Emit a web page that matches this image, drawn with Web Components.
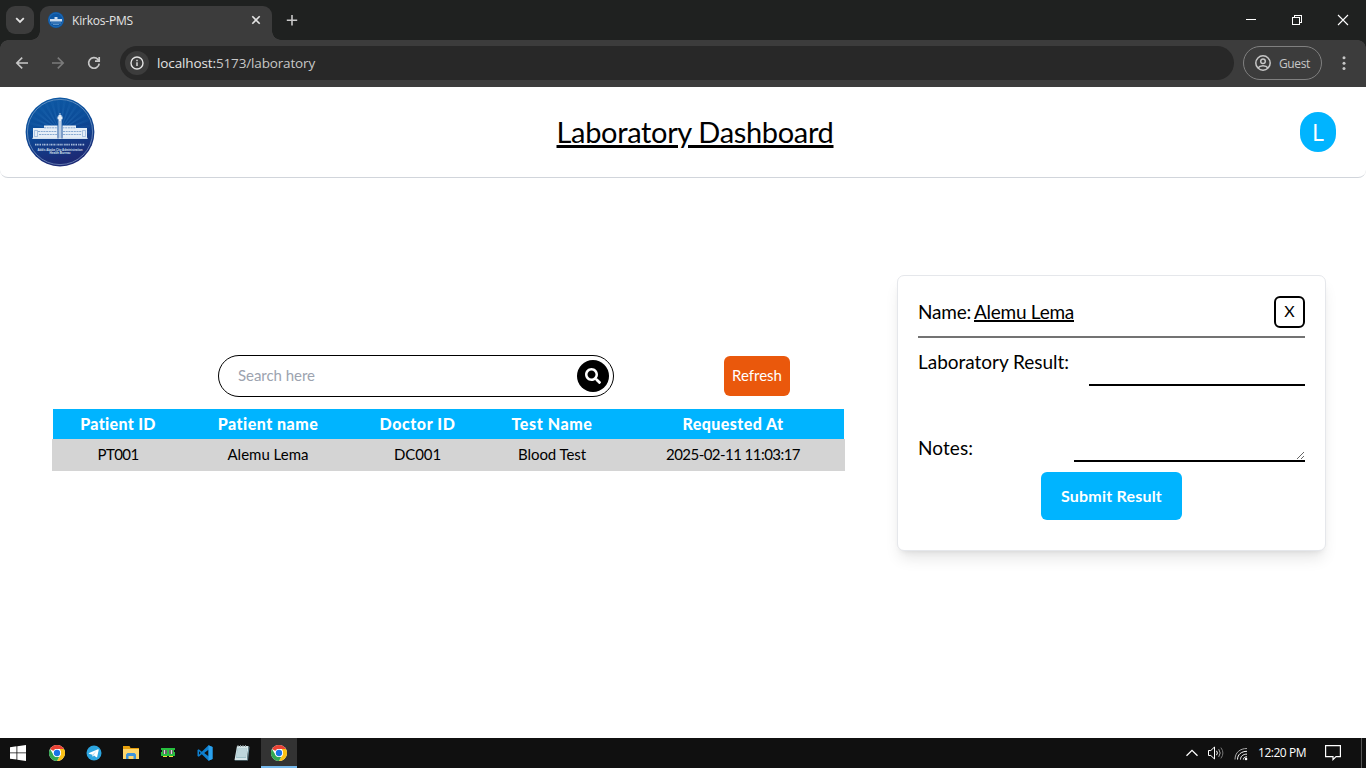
<!DOCTYPE html>
<html lang="en">
<head>
<meta charset="utf-8">
<title>Kirkos-PMS</title>
<style>
html,body{margin:0;padding:0;height:100%;overflow:hidden;background:#fff}
body{display:grid;grid-template-rows:40px 47px 1fr 30px;height:768px;font-family:"Open Sans","Noto Sans",sans-serif;font-size:12px}
</style>
</head>
<body>
<tab-strip><fit-text w="61">Kirkos-PMS</fit-text></tab-strip>
<browser-toolbar>
  <fit-text slot="host" w="59">localhost:</fit-text><fit-text slot="path" w="99">5173/laboratory</fit-text>
  <fit-text slot="profile" w="31">Guest</fit-text>
</browser-toolbar>
<lab-page></lab-page>
<task-bar></task-bar>

<script>
const define = (name, html, setup) => customElements.define(name, class extends HTMLElement {
  constructor() {
    super();
    this.attachShadow({ mode: 'open' });
    const t = document.createElement('template');
    t.innerHTML = html;
    this.shadowRoot.append(t.content.cloneNode(true));
    if (setup) setup(this, this.shadowRoot);
  }
});

/* Round city crest shown as the page logo */
define('city-crest', `
<style>:host{display:block;width:70px;height:70px;flex:none}svg{display:block;width:100%;height:100%}</style>
<svg viewBox="0 0 70 70">
  <defs>
    <linearGradient id="g" x1="0" y1="0" x2=".3" y2="1"><stop offset="0" stop-color="#0d5ba6"/><stop offset=".5" stop-color="#0b4b98"/><stop offset="1" stop-color="#1c2a75"/></linearGradient>
    <clipPath id="c"><path d="M0 0h70v40H0z"/></clipPath>
    <radialGradient id="r" gradientUnits="userSpaceOnUse" cx="35" cy="34" r="31"><stop offset="0" stop-color="#3d8bd0" stop-opacity=".4"/><stop offset="1" stop-color="#3d8bd0" stop-opacity=".05"/></radialGradient>
  </defs>
  <circle cx="35" cy="35" r="34.4" fill="url(#g)"/>
  <g id="rays" clip-path="url(#c)" fill="url(#r)"></g>
  <circle cx="35" cy="35" r="32.6" fill="none" stroke="#9db9d8" stroke-width=".55"/>
  <g fill="#e6eef7">
    <path d="M33.500 18h3v1.600h1v2.600h-1V42h-3V22.200h-1v-2.600h1z"/><path d="M34.600 16h.8v3h-.8z"/>
    <path d="M19 28.500h13.500V42H8V31h11z"/><path d="M51 28.500H37.500V42H62V31H51z"/>
  </g>
  <g stroke="#6f97c6" stroke-width=".8" fill="none">
    <path d="M19 30.800h13.500M37.500 30.800H51M13 34.500h19M38 34.500h19M14 37.500h18M38 37.500h18" stroke-dasharray="2 .7"/>
    <path d="M35 24v17" stroke-width=".7"/><path d="M9.500 33.500h3v6h-3zM57.500 33.500h3v6h-3z" stroke-width=".5"/>
  </g>
  <path d="M7 41.300h56" stroke="#cbd9ea" stroke-width=".8"/>
  <path d="M10 47.700h50" stroke="#a9bfdc" stroke-width="1.700" stroke-dasharray="1 .5 1.400 .5 .8 .5 1.300 1.200"/>
  <g fill="#d5e0ef" font-family="Liberation Sans, sans-serif" font-weight="700" font-size="3.500" text-anchor="middle">
    <text x="35" y="53.500" textLength="45" lengthAdjust="spacingAndGlyphs">Addis Ababa City Administration</text>
    <text x="35" y="56.900" textLength="21" lengthAdjust="spacingAndGlyphs">Health Bureau</text>
  </g>
</svg>`, (el, root) => {
  let d = '';
  for (let i = 0; i < 30; i++) {
    const a = i * Math.PI / 15, b = a + 0.09;
    d += `<path d="M35 34L${35 + 31 * Math.cos(a)} ${34 + 31 * Math.sin(a)}L${35 + 31 * Math.cos(b)} ${34 + 31 * Math.sin(b)}z"/>`;
  }
  root.getElementById('rays').innerHTML = d;
});

define('tab-strip', `
<style>
:host{display:flex;background:#1f2120;height:40px;color:#e3e3e3;box-sizing:border-box;padding:6px 0 0 6px}
.search{width:28px;height:28px;border-radius:9px;background:#3c3c3c;display:grid;place-items:center}
.tab{position:relative;width:232px;height:34px;margin-left:6px;background:#3c3c3c;border-radius:9px 9px 0 0;display:flex;align-items:center;box-sizing:border-box;padding:0 10px 6px 8px;line-height:18px}
.tab:before,.tab:after{content:"";position:absolute;bottom:0;width:9px;height:9px}
.tab:before{left:-9px;background:radial-gradient(circle at 0 0,transparent 8.5px,#3c3c3c 9px)}
.tab:after{right:-9px;background:radial-gradient(circle at 100% 0,transparent 8.5px,#3c3c3c 9px)}
.fav{width:16px;height:16px;margin-right:8px;display:block}
slot{display:block;padding-top:2px}
.x{margin-left:auto}
svg{display:block}
.new{margin:6px 0 0 12px}
.win{margin-left:auto;display:flex;height:28px;margin-right:0}
.win div{width:46px;display:grid;place-items:center}
</style>
<div class="search"><svg width="10" height="10" viewBox="0 0 10 10" fill="none" stroke="#e3e3e3" stroke-width="1.800"><path d="M1.200 3.200L5 7l3.800-3.800"/></svg></div>
<div class="tab">
  <svg class="fav" viewBox="0 0 16 16"><circle cx="8" cy="8" r="8" fill="#0c57a5"/><circle cx="8" cy="8" r="7" fill="none" stroke="#2f78bd" stroke-width=".6"/><path d="M2 7h4.500V5h3v2H14v2.500H2z" fill="#c9dcf0"/><path d="M3 11h10M5 12.500h6" stroke="#6d9fd0" stroke-width=".8"/></svg>
  <slot></slot>
  <svg class="x" width="12" height="12" viewBox="0 0 12 12" stroke="#e3e3e3" stroke-width="1.600"><path d="M2.300 2.300l7.400 7.400M9.700 2.300L2.300 9.700"/></svg>
</div>
<svg class="new" width="16" height="16" viewBox="0 0 16 16" stroke="#c9c9c9" stroke-width="1.600"><path d="M8 3v10.400M2.800 8.200h10.400"/></svg>
<div class="win">
  <div><svg width="12" height="12" shape-rendering="crispEdges"><path d="M1 5h10v1H1z" fill="#fff"/></svg></div>
  <div><svg width="12" height="12" fill="none" stroke="#fff" shape-rendering="crispEdges"><path d="M1.500 3.500h7v7h-7zM3.500 3V1.500h7v7H9"/></svg></div>
  <div><svg width="12" height="12" stroke="#fff" stroke-width="1.100"><path d="M1 1l10 10M11 1L1 11"/></svg></div>
</div>`);

define('browser-toolbar', `
<style>
:host{display:flex;align-items:center;height:47px;box-sizing:border-box;padding:0 14px 1px 14px;color:#e3e3e3;
 background:radial-gradient(circle at 8px 8px,#3c3c3c 7.500px,#1f2120 8px) 0 0/8px 8px no-repeat,radial-gradient(circle at 0 8px,#3c3c3c 7.500px,#1f2120 8px) 100% 0/8px 8px no-repeat,#3c3c3c}
svg{display:block;flex:none}
.nav{display:flex;gap:20px}
.omni{margin-left:18px;width:1114px;height:34px;border-radius:17px;background:#282828;display:flex;align-items:center;box-sizing:border-box;padding-left:5px;font-size:13.500px}
.info{width:24px;height:24px;border-radius:50%;background:#3c3c3c;display:grid;place-items:center;margin-right:8px}
.path{color:#c7c7c7}
.guest{margin-left:9px;width:79px;height:34px;border:1px solid #808080;border-radius:17px;box-sizing:border-box;display:flex;align-items:center;padding-left:11px;gap:8px;color:#c7c7c7}
.dots{margin-left:auto}
</style>
<div class="nav">
<svg width="16" height="16" viewBox="0 0 16 16" fill="none" stroke="#c7c7c7" stroke-width="1.600"><path d="M14 8H3M8.200 2.600L2.800 8l5.400 5.400"/></svg>
<svg width="16" height="16" viewBox="0 0 16 16" fill="none" stroke="#7b7b7b" stroke-width="1.600"><path d="M2 8h11M7.800 2.600L13.200 8l-5.400 5.400"/></svg>
<svg width="16" height="16" viewBox="0 0 16 16" fill="none" stroke="#c7c7c7" stroke-width="1.700"><path d="M13.200 8.600A5.300 5.300 0 1 1 11.900 4.400L13 5.700"/><path d="M13.200 2v4.200H9"/></svg>
</div>
<div class="omni"><div class="info"><svg width="14" height="14" viewBox="0 0 14 14" fill="none" stroke="#e3e3e3" stroke-width="1.400"><circle cx="7" cy="7" r="6"/><path d="M7 6.200V10M7 3.800v1.500"/></svg></div><slot name="host"></slot><span class="path"><slot name="path"></slot></span></div>
<div class="guest"><svg width="16" height="16" viewBox="0 0 16 16" fill="none" stroke="#c7c7c7" stroke-width="1.500"><circle cx="8" cy="8" r="7.200"/><circle cx="8" cy="6.200" r="2.300"/><path d="M3 13c1.300-2 3-2.300 5-2.300s3.700.3 5 2.300"/></svg><slot name="profile"></slot></div>
<svg class="dots" width="16" height="16" fill="#c7c7c7"><circle cx="8" cy="2.800" r="1.500"/><circle cx="8" cy="8.200" r="1.500"/><circle cx="8" cy="13.600" r="1.500"/></svg>`);

define('page-header', `
<style>
:host{display:flex;align-items:center;justify-content:space-between;height:91px;box-sizing:border-box;border-bottom:1px solid #d1d5db;border-radius:0 0 8px 8px;padding:0 30px 0 25px}
h1{margin:0;font-weight:400;font-size:29px;line-height:36px;padding:0 5px 0 0}
.avatar{width:36px;height:40px;border-radius:18px;background:#00b4ff;color:#fff;display:grid;place-items:center;font:23px/40px "Noto Sans",sans-serif}
</style>
<city-crest></city-crest><h1><slot></slot></h1><div class="avatar">L</div>`);

define('search-box', `
<style>
:host{display:flex;align-items:center;justify-content:space-between;box-sizing:border-box;width:396px;height:42px;border:1px solid #000;border-radius:21px;padding:0 4px 0 19px;color:#9ca3af}
slot{display:block;padding-bottom:2px}
i{width:32px;height:32px;border-radius:50%;background:#000;display:grid;place-items:center}
</style>
<slot></slot><i><svg width="16" height="16" viewBox="0 0 512 512" fill="#fff"><path d="M505 442.700L405.300 343c-4.500-4.500-10.600-7-17-7H372c27.600-35.300 44-79.700 44-128C416 93.100 322.900 0 208 0S0 93.100 0 208s93.100 208 208 208c48.300 0 92.700-16.400 128-44v16.300c0 6.400 2.500 12.500 7 17l99.700 99.700c9.400 9.400 24.600 9.400 33.900 0l28.300-28.300c9.400-9.400 9.400-24.600.1-34zM208 336c-70.700 0-128-57.200-128-128 0-70.700 57.200-128 128-128 70.700 0 128 57.200 128 128 0 70.700-57.200 128-128 128z"/></svg></i>`);

define('push-button', `
<style>
:host{display:block}
button{display:block;font:inherit;line-height:20px;margin:0;border:0;border-radius:6px;color:#fff;background:var(--bg);padding:var(--pad)}
</style><button><slot></slot></button>`);

define('request-table', `
<style>
:host{display:block;width:793px}
.row{display:grid;grid-template-columns:130px 170px 129px 140px 222px;text-align:center;font-size:15px}
.head{background:#00b4ff;color:#fff;font-weight:900;font-size:16px;height:30px;line-height:29px;margin:0 1px}
.body{background:#d4d4d4;height:32px;line-height:30px;padding:0 1px}
</style>
<div class="row head"><span><fit-text w="76">Patient ID</fit-text></span><span><fit-text w="101">Patient name</fit-text></span><span><fit-text w="76">Doctor ID</fit-text></span><span><fit-text w="81">Test Name</fit-text></span><span><fit-text w="101">Requested At</fit-text></span></div>
<div class="row body"><span><fit-text w="41">PT001</fit-text></span><span><fit-text w="81">Alemu Lema</fit-text></span><span><fit-text w="47">DC001</fit-text></span><span><fit-text w="68">Blood Test</fit-text></span><span><fit-text w="134">2025-02-11 11:03:17</fit-text></span></div>`);

define('result-card', `
<style>
:host{display:flex;flex-direction:column;box-sizing:border-box;width:429px;height:276px;border:1px solid #e5e7eb;border-radius:7px;padding:20px;box-shadow:0 10px 15px -3px rgba(0,0,0,.1),0 4px 6px -4px rgba(0,0,0,.1);font-size:19px;line-height:28px;background:#fff}
.top{display:flex;justify-content:space-between;height:40px;border-bottom:2px solid #737373}
.name{display:flex;gap:3px;padding-top:2px}
u{text-decoration-thickness:2px;text-underline-offset:1px;text-decoration-skip-ink:none}
.x{width:31px;height:32px;box-sizing:border-box;border:2px solid #000;border-radius:6px;background:#fff;padding:0 0 2px;font:16px/26px Lato,sans-serif;color:#000}
.line{display:flex;justify-content:space-between}
.result{height:48px;padding-top:0}
.result label{padding-top:10px}
.result input{width:216px;height:36px;margin-top:12px}
.notes{height:62px;margin-top:14px}
.notes label{padding-top:34px}
input,textarea{box-sizing:border-box;border:0;border-bottom:2px solid #000;padding:0;background:none;outline:0;border-radius:0}
textarea{width:231px;height:62px;resize:vertical;margin:0}
push-button{align-self:center;margin-top:10px;font-size:16px;font-weight:700;--bg:#00b4ff;--pad:14px 20px}
</style>
<div class="top"><div class="name"><fit-text w="53">Name:</fit-text><fit-text w="100"><u>Alemu Lema</u></fit-text></div><button class="x">X</button></div>
<div class="line result"><label><fit-text w="151">Laboratory Result:</fit-text></label><input></div>
<div class="line notes"><label><fit-text w="55">Notes:</fit-text></label><textarea></textarea></div>
<push-button><fit-text w="101">Submit Result</fit-text></push-button>`);

define('lab-page', `
<style>
:host{display:flex;flex-direction:column;background:#fff;color:#000;font-family:Lato,"Liberation Sans",sans-serif;font-size:15px;min-height:0}
u{text-decoration-thickness:3px;text-underline-offset:2px}
main{flex:1;display:flex;justify-content:space-between;align-items:flex-start;padding:97px 40px 0 52px}
section{padding-top:80px}
.tools{display:flex;align-items:center;padding:0 55px 0 166px;justify-content:space-between;margin-bottom:12px}
.tools push-button{--bg:#ea580c;--pad:9px 8px 11px}
</style>
<page-header><fit-text w="277"><u>Laboratory Dashboard</u></fit-text></page-header>
<main>
  <section>
    <div class="tools"><search-box><fit-text w="77">Search here</fit-text></search-box><push-button><fit-text w="50">Refresh</fit-text></push-button></div>
    <request-table></request-table>
  </section>
  <result-card></result-card>
</main>`);

define('chrome-icon', `
<style>:host,svg{display:block}</style>
<svg width="16" height="16" viewBox="0 0 48 48"><circle cx="24" cy="24" r="24" fill="#fff"/>
<path d="M24 0a24 24 0 0 1 20.800 12H24a12 12 0 0 0-10.400 6L3.200 12A24 24 0 0 1 24 0z" fill="#ea4335"/>
<path d="M44.800 12A24 24 0 0 1 24 48l10.400-18a12 12 0 0 0 0-12L33 12z" fill="#fbc116"/>
<path d="M24 48A24 24 0 0 1 3.200 12l10.400 18A12 12 0 0 0 24 36l7-.5z" fill="#34a853"/>
<circle cx="24" cy="24" r="12" fill="#fff"/><circle cx="24" cy="24" r="9.500" fill="#1a73e8"/></svg>`);

define('task-bar', `
<style>
:host{display:flex;height:30px;background:#101010;color:#fff}
svg{display:block}
.apps{display:flex}
.apps>*{width:37px;height:30px;display:grid;place-items:center}
.apps .start{width:38px;place-items:center start;padding-left:10px;box-sizing:border-box}
.apps .on{width:36px;margin-left:1px;background:#333;box-shadow:inset 0 -2px #76b9ed}
.tray{margin-left:auto;display:flex;align-items:center}
.clock{margin:0 19px 0 9px;line-height:30px}
.note{margin-bottom:1px}
.peek{width:4px;height:30px;margin-left:20px;border-left:1px solid #555}
</style>
<div class="apps">
<div class="start"><svg width="16" height="16" fill="#fff"><path d="M0 2.200l6.500-.9v6.200H0zM7.300 1.200L16 0v7.500H7.300zM0 8.300h6.500v6.300L0 13.700zM7.300 8.300H16V16l-8.700-1.200z"/></svg></div>
<div><chrome-icon></chrome-icon></div>
<div><svg width="16" height="16"><circle cx="8" cy="8" r="7.500" fill="#2ca5e0"/><path d="M3 7.900l9-3.600c.5-.2.800.1.700.6l-1.500 6.900c-.1.500-.5.600-.9.400L8 10.500l-1.200 1.200-.5-2L3 8.700c-.4-.2-.4-.6 0-.8z" fill="#fff"/><path d="M6.300 9.700l4-3.600-2.800 4.100-.7 1.500z" fill="#b5d9ee"/></svg></div>
<div><svg width="16" height="16"><path d="M0 1h6.500l1 2H16v11H0z" fill="#e8a00c"/><path d="M0 4h16v10H0z" fill="#ffd66b"/><path d="M3 14V9.500L4.500 8h7L13 9.500V14h-2.500v-3h-5v3z" fill="#3f93da"/></svg></div>
<div><svg width="16" height="16" shape-rendering="crispEdges"><path d="M1 3h14v2h-1v2h1v4H1V7h1V5H1z" fill="#27c03f"/><path d="M3 5h4v4H3zM9 5h4v4H9z" fill="#6b6668"/><path d="M4 5h1v4H4zM11 5h1v4h-1z" fill="#d9dad9"/><path d="M3 11h4v1H3zM9 11h4v1H9z" fill="#f3e33c"/></svg></div>
<div><svg width="16" height="16" viewBox="0 0 100 100"><path d="M72 2L30 42 11 27 3 31v38l8 4 19-15 42 40 25-11V13zM72 29v42L45 50zM13 39l10 11-10 11z" fill="#0e7fce" fill-rule="evenodd"/><path d="M72 2l25 11v74L72 98z" fill="#2ba2ee"/></svg></div>
<div><svg width="16" height="16"><path d="M3 1h11.500L13 15H.5z" fill="#d5e5e8"/><path d="M3.200 3.500H13L12 13H2z" fill="#9fc1c8"/><path d="M3.500 5h9M3.300 7h9M3 9h9M2.800 11h9" stroke="#edf6f7" stroke-width=".8"/><path d="M14.500 1l1 1L14 15.500H1L.5 15H13z" fill="#6c8f99"/><path d="M4 0v2M6.500 0v2M9 0v2M11.500 0v2" stroke="#8b9799"/></svg></div>
<div class="on"><chrome-icon></chrome-icon></div>
</div>
<div class="tray">
<svg width="14" height="16" fill="none" stroke="#fff" stroke-width="1.300"><path d="M1.500 10.800L7 5.300l5.500 5.500"/></svg>
<svg width="18" height="16" viewBox="0 0 18 16" fill="none" stroke="#fff" style="margin-left:8px"><path d="M1.500 5.500h2.300L7.500 2v12l-3.700-3.500H1.500z"/><path d="M9.500 5.800q1.800 2.200 0 4.400"/><path d="M11.700 4.200q3 3.800 0 7.600" stroke="#aaa"/><path d="M13.900 2.600q4 5.400 0 10.800" stroke="#777"/></svg>
<svg width="16" height="16" viewBox="0 0 16 16" fill="none" stroke="#fff" style="margin-left:8px"><path d="M2 14.500C2 7.500 7 3.500 14 3.500" stroke="#aaa"/><path d="M4.500 14.500c0-5 4-8.200 9.500-8.200M7.500 14.500c0-3.300 2.700-5.400 6.500-5.400M10.300 14.500c0-1.700 1.400-2.700 3.700-2.700"/><circle cx="13" cy="14" r="1.300" fill="#fff" stroke="none"/></svg>
<div class="clock"><fit-text w="48">12:20 PM</fit-text></div>
<svg class="note" width="16" height="17" fill="none" stroke="#fff" stroke-width="1.200"><path d="M.6 1.600h14.800v11H11l-3 3v-3H.6z"/></svg>
<div class="peek"></div>
</div>`);

/* Spreads its text over a given width by adjusting the letter spacing */
customElements.define('fit-text', class extends HTMLElement {
  connectedCallback() {
    if (this.shadowRoot) return;
    this.attachShadow({ mode: 'open' }).innerHTML =
      '<style>:host{display:inline-block;white-space:nowrap}span{display:inline-block}</style><span><slot></slot></span>';
    const w = +this.getAttribute('w');
    const span = this.shadowRoot.querySelector('span');
    const n = this.textContent.length;
    span.style.letterSpacing = (w - span.getBoundingClientRect().width) / n + 'px';
    this.style.width = w + 'px';
  }
});
</script>
</body>
</html>
